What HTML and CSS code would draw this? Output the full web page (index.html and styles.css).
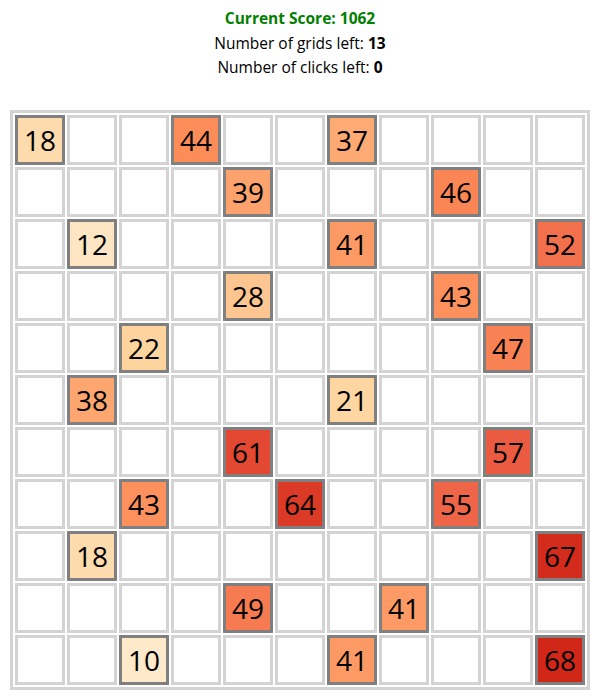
FILE: index.html
```html
<!DOCTYPE html>
<html lang="en">
<head>
  <meta charset="UTF-8">
  <title>Grid Game</title>
  <link rel="stylesheet" href="styles.css">
</head>
<body>

  <!-- Placar -->
  <div class="stats">
    <div class="score">Current Score: 1062</div>
    <div>Number of grids left: <b>13</b></div>
    <div>Number of clicks left: <b>0</b></div>
  </div>

  <!-- Tabuleiro -->
  <table class="board" id="board"></table>

  <script>
    const cells = {
      '0,0': 18, '0,3': 44, '0,6': 37,
      '1,4': 39, '1,8': 46,
      '2,1': 12, '2,6': 41, '2,10': 52,
      '3,4': 28, '3,8': 43,
      '4,2': 22, '4,9': 47,
      '5,1': 38, '5,6': 21,
      '6,4': 61, '6,9': 57,
      '7,2': 43, '7,5': 64, '7,8': 55,
      '8,1': 18, '8,10': 67,
      '9,4': 49, '9,7': 41,
      '10,2': 10, '10,6': 41, '10,10': 68
    };

    // OrRd
    const stops = ['#fff7ec', '#fee8c8', '#fdd49e', '#fdbb84', '#fc8d59', '#ef6548', '#d7301f', '#b30000', '#7f0000'];

    function hex(c) {
      return [1, 3, 5].map(i => parseInt(c.substr(i, 2), 16));
    }

    function color(v) {
      const t = Math.min(v / 88, 1) * (stops.length - 1);
      const i = Math.min(Math.floor(t), stops.length - 2);
      const f = t - i;
      const a = hex(stops[i]);
      const b = hex(stops[i + 1]);
      const rgb = a.map((x, k) => Math.round(x + (b[k] - x) * f));
      return 'rgb(' + rgb.join(',') + ')';
    }

    const board = document.getElementById('board');
    for (let r = 0; r < 11; r++) {
      const tr = document.createElement('tr');
      for (let c = 0; c < 11; c++) {
        const td = document.createElement('td');
        td.className = 'cell';
        const v = cells[r + ',' + c];
        if (v) {
          td.classList.add('filled');
          td.textContent = v;
          td.style.background = color(v);
        }
        tr.appendChild(td);
      }
      board.appendChild(tr);
    }
  </script>

</body>
</html>
```

FILE: styles.css
```css
body {
  margin: 0;
  font-family: "Open Sans", "Noto Sans", sans-serif;
  color: #000;
}

.stats {
  text-align: center;
  padding-top: 6px;
  font-size: 15.5px;
  line-height: 24.5px;
}

.score {
  color: green;
  font-weight: bold;
}

.board {
  margin: 30px auto 0;
  border: 3px solid lightgray;
  border-spacing: 2px;
}

.cell {
  width: 44px;
  height: 44px;
  padding: 0;
  border: 3px solid lightgray;
  text-align: center;
  font-size: 28px;
  line-height: 44px;
}

.cell.filled {
  border-color: gray;
}
```
